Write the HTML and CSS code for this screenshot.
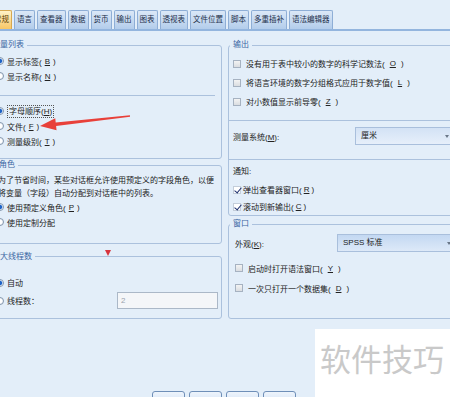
FILE: index.html
```html
<!DOCTYPE html>
<html lang="zh-CN">
<head>
    <meta charset="UTF-8">
    <meta name="viewport" content="width=device-width, initial-scale=1.0">
    <title>选项</title>
    <link rel="stylesheet" href="styles.css">
</head>
<body>
    <!-- Tab strip -->
    <div class="tabs">
        <span class="tab active">常规</span>
        <span class="tab">语言</span>
        <span class="tab">查看器</span>
        <span class="tab">数据</span>
        <span class="tab">货币</span>
        <span class="tab">输出</span>
        <span class="tab">图表</span>
        <span class="tab">透视表</span>
        <span class="tab">文件位置</span>
        <span class="tab">脚本</span>
        <span class="tab">多重插补</span>
        <span class="tab">语法编辑器</span>
    </div>

    <div class="panes">
        <div class="col col-left">
            <fieldset class="group g-vars">
                <legend>变量列表</legend>
                <div class="row"><span class="radio on"></span>显示标签(<u>B</u>)</div>
                <div class="row"><span class="radio"></span>显示名称(<u>N</u>)</div>
                <div class="sep"></div>
                <div class="row"><span class="radio on"></span><span class="focus">字母顺序(<u>H</u>)</span></div>
                <div class="row"><span class="radio"></span>文件(<u>F</u>)</div>
                <div class="row"><span class="radio"></span>测量级别(<u>T</u>)</div>
            </fieldset>

            <fieldset class="group g-roles">
                <legend>角色</legend>
                <p class="desc">为了节省时间，某些对话框允许使用预定义的字段角色，以便<br>将变量（字段）自动分配到对话框中的列表。</p>
                <div class="row"><span class="radio on"></span>使用预定义角色(<u>P</u>)</div>
                <div class="row"><span class="radio"></span>使用定制分配</div>
            </fieldset>

            <fieldset class="group g-threads">
                <legend>最大线程数</legend>
                <div class="row"><span class="radio on"></span>自动</div>
                <div class="row row-input"><span class="radio"></span>线程数：<input class="num" type="text" value="2" disabled></div>
            </fieldset>
        </div>

        <div class="col col-right">
            <fieldset class="group g-output">
                <legend>输出</legend>
                <div class="row row-chk"><span class="chk"></span>没有用于表中较小的数字的科学记数法(<u>O</u>)</div>
                <div class="row row-chk"><span class="chk"></span>将语言环境的数字分组格式应用于数字值(<u>L</u>)</div>
                <div class="row row-chk"><span class="chk"></span>对小数值显示前导零(<u>Z</u>)</div>
                <div class="sep"></div>
                <div class="row row-field">
                    <span class="field-label lbl-measure">测量系统(<u>M</u>):</span>
                    <span class="dropdown">厘米</span>
                </div>
                <div class="sep sep-notify"></div>
                <div class="notify-title">通知:</div>
                <div class="row row-on"><span class="chk on"></span>弹出查看器窗口(<u>R</u>)</div>
                <div class="row row-on"><span class="chk on"></span>滚动到新输出(<u>C</u>)</div>
            </fieldset>

            <fieldset class="group g-window">
                <legend>窗口</legend>
                <div class="row row-field">
                    <span class="field-label lbl-look">外观(<u>K</u>):</span>
                    <span class="dropdown dropdown-look">SPSS 标准</span>
                </div>
                <div class="row row-win"><span class="chk"></span>启动时打开语法窗口(<u>Y</u>)</div>
                <div class="row row-win"><span class="chk"></span>一次只打开一个数据集(<u>D</u>)</div>
            </fieldset>
        </div>
    </div>

    <div class="buttons">
        <button class="btn">确定</button>
        <button class="btn">粘贴(P)</button>
        <button class="btn">重置(R)</button>
        <button class="btn">帮助</button>
    </div>

    <!-- Annotations drawn over the dialog -->
    <svg class="arrow" width="100" height="24" viewBox="0 0 100 24">
        <polygon points="4,18 20.56,22.2 20.1,18.03 94.08,8.7 93.92,7.3 19.7,14.45 19.24,10.28" fill="#e8403a"/>
    </svg>
    <span class="marker"></span>

    <div class="watermark">软件技巧</div>
</body>
</html>
```

FILE: styles.css
```css
* {
    box-sizing: border-box;
}

body {
    margin: 0;
    width: 450px;
    height: 397px;
    overflow: hidden;
    position: relative;
    background-color: #e3eef9;
    font-family: "Liberation Sans", "Noto Sans CJK SC", sans-serif;
    font-size: 8px;
    color: #222;
}

u {
    text-decoration-thickness: 1px;
}

/* Tabs */
.tabs {
    display: flex;
    gap: 2px;
    height: 31px;
    padding-top: 10px;
    margin-left: -9px;
    border-bottom: 2px solid #93b5de;
}

.tab {
    font-size: 7.5px;
    line-height: 17px;
    padding: 0 2px;
    border: 1px solid #8eaed6;
    border-bottom: none;
    border-radius: 2px 2px 0 0;
    background: linear-gradient(#dbe8f7, #b3cdeb);
    color: #1e2f4a;
    white-space: nowrap;
}

.tab.active {
    background: linear-gradient(#fff2c8, #f8c665);
    border-color: #d6a850;
    color: #5a3a00;
}

/* Columns */
.panes {
    display: flex;
    gap: 6px;
    margin-top: 9px;
}

.col {
    display: flex;
    flex-direction: column;
}

.col-left {
    width: 240px;
    margin-left: -18px;
    flex: none;
}

.col-right {
    width: 226px;
    flex: none;
}

.group {
    margin: 0;
    border: 1px solid #abc1dd;
    border-radius: 3px;
    min-width: 0;
}

.group legend {
    font-size: 8px;
    line-height: 10px;
    padding: 0 3px;
    color: #3b66a3;
}

.row {
    display: flex;
    align-items: center;
    gap: 3px;
    height: 15px;
    white-space: nowrap;
}

.sep {
    border-top: 1px solid #abc1dd;
}

/* Radio and check boxes */
.radio {
    width: 8px;
    height: 8px;
    flex: none;
    border: 1px solid #8396ad;
    border-radius: 50%;
    background: radial-gradient(circle, #fff 40%, #dfe6ee);
}

.radio.on {
    background: radial-gradient(circle, #1f63c6 0 1.8px, #9fc0ec 2.3px, #fff 3px);
}

.chk {
    position: relative;
    width: 8px;
    height: 8px;
    flex: none;
    border: 1px solid #a6b2c1;
    background: linear-gradient(#f3f3f3, #dadde1);
}

.chk.on {
    background: #fff;
    border-color: #c3cdd9;
}

.chk.on::after {
    content: "";
    position: absolute;
    left: 2px;
    top: -1px;
    width: 3px;
    height: 6px;
    border-right: 1.5px solid #1c2f6e;
    border-bottom: 1.5px solid #1c2f6e;
    transform: rotate(40deg);
}

.focus {
    border: 1px dotted #555;
    padding: 0 1px;
    line-height: 11px;
}

/* Left column groups */
.g-vars {
    padding: 3.5px 0 9px 13px;
}

.g-vars legend,
.g-threads legend {
    margin-left: -7px;
}

.g-vars .sep {
    margin: 11px 6px 8px -13px;
}

.g-roles {
    margin-top: 1.5px;
    padding: 3.5px 0 13px 13px;
}

.g-roles legend {
    margin-left: 0;
}

.desc {
    margin: 0 0 0 2px;
    line-height: 13px;
    white-space: nowrap;
}

.g-threads {
    margin-top: 8px;
    padding: 13.5px 0 8.5px 13px;
}

.row-input {
    height: 18px;
    margin-top: 1.5px;
}

.num {
    width: 101px;
    height: 17px;
    margin: 0 3px 0 auto;
    padding: 0 0 0 3px;
    border: 1px solid #abb8c8;
    background-color: #f4f6f9;
    color: #9aa3ad;
    font-family: inherit;
    font-size: 8px;
}

/* Right column groups */
.g-output {
    padding: 4px 0 0 4px;
}

.g-output legend {
    margin-left: -3px;
}

.row-chk {
    gap: 5px;
    height: 19px;
}

.g-output .sep {
    margin: 9px 0 0 -4px;
}

.g-output .sep-notify {
    margin-top: 14px;
}

.row-field {
    height: 18px;
    gap: 0;
    margin-top: 6px;
}

.field-label {
    flex: none;
}

.lbl-measure {
    width: 122px;
}

.lbl-look {
    width: 102px;
}

.dropdown {
    position: relative;
    flex: none;
    width: 120px;
    height: 18px;
    line-height: 16px;
    padding-left: 5px;
    border: 1px solid #a9bfdc;
    background: linear-gradient(#d3e2f5, #e6effa);
}

.dropdown::after {
    content: "";
    position: absolute;
    left: 89px;
    top: 7px;
    border-left: 2.5px solid transparent;
    border-right: 2.5px solid transparent;
    border-top: 3px solid #6a7788;
}

.dropdown-look {
    background: linear-gradient(#c3d8f2, #dde9f8);
}

.dropdown-look::after {
    left: 109px;
}

.notify-title {
    margin-top: 5px;
    line-height: 13px;
}

.row-on {
    height: 17px;
    gap: 2px;
}

.notify-title + .row-on {
    margin-top: 3px;
}

.g-window {
    margin-top: 3px;
    padding: 5px 0 20px 6px;
}

.g-window legend {
    margin-left: -5px;
}

.g-window .row-field {
    margin-top: 0;
}

.row-win {
    gap: 5px;
    height: 20px;
}

.g-window .row-field + .row-win {
    margin-top: 6px;
}

/* Bottom buttons */
.buttons {
    display: flex;
    gap: 4px;
    margin-top: 72px;
    padding-left: 152px;
}

.btn {
    width: 33px;
    height: 20px;
    padding: 0;
    border: 1px solid #6f8fb8;
    border-radius: 3px;
    background: linear-gradient(#eef4fc, #c6d9f1);
    font-family: inherit;
    font-size: 8px;
    color: #222;
}

/* Annotations */
.arrow {
    position: absolute;
    left: 36px;
    top: 108px;
}

.marker {
    position: absolute;
    left: 105px;
    top: 250px;
    border-left: 3.5px solid transparent;
    border-right: 3.5px solid transparent;
    border-top: 6px solid #d8343c;
}

.watermark {
    position: absolute;
    left: 315px;
    top: 329px;
    width: 135px;
    height: 68px;
    padding: 12px 0 0 5px;
    background-color: #fff;
    font-size: 31px;
    line-height: 40px;
    color: #c9c9c9;
    white-space: nowrap;
}
```
